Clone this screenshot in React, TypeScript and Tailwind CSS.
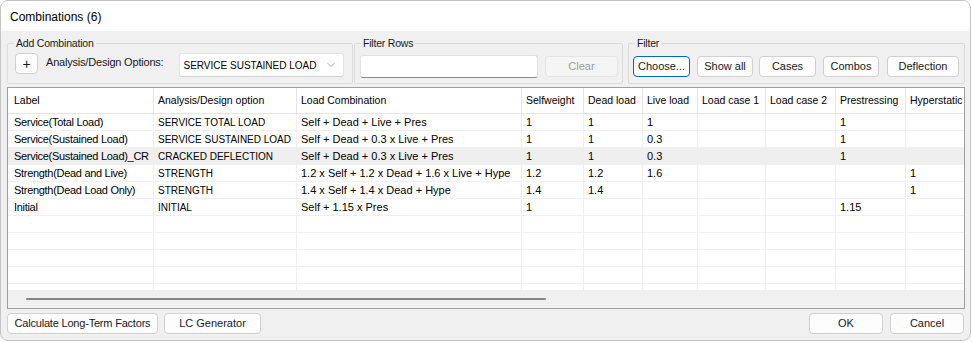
import { ChevronDown } from "lucide-react";

const columns = [
  { label: "Label", w: "w-[146px]", pad: "pl-[6px]" },
  { label: "Analysis/Design option", w: "w-[143px]", pad: "pl-[4px]" },
  { label: "Load Combination", w: "w-[225px]", pad: "pl-[4px]" },
  { label: "Selfweight", w: "w-[62px]", pad: "pl-[4px]" },
  { label: "Dead load", w: "w-[59px]", pad: "pl-[4px]" },
  { label: "Live load", w: "w-[55px]", pad: "pl-[4px]" },
  { label: "Load case 1", w: "w-[68px]", pad: "pl-[4px]" },
  { label: "Load case 2", w: "w-[70px]", pad: "pl-[4px]" },
  { label: "Prestressing", w: "w-[70px]", pad: "pl-[4px]" },
  { label: "Hyperstatic", w: "w-[80px]", pad: "pl-[4px]" },
];

const rows = [
  ["Service(Total Load)", "SERVICE TOTAL LOAD", "Self + Dead + Live + Pres", "1", "1", "1", "", "", "1", ""],
  ["Service(Sustained Load)", "SERVICE SUSTAINED LOAD", "Self + Dead + 0.3 x Live + Pres", "1", "1", "0.3", "", "", "1", ""],
  ["Service(Sustained Load)_CR", "CRACKED DEFLECTION", "Self + Dead + 0.3 x Live + Pres", "1", "1", "0.3", "", "", "1", ""],
  ["Strength(Dead and Live)", "STRENGTH", "1.2 x Self + 1.2 x Dead + 1.6 x Live + Hype", "1.2", "1.2", "1.6", "", "", "", "1"],
  ["Strength(Dead Load Only)", "STRENGTH", "1.4 x Self + 1.4 x Dead + Hype", "1.4", "1.4", "", "", "", "", "1"],
  ["Initial", "INITIAL", "Self + 1.15 x Pres", "1", "", "", "", "", "1.15", ""],
];

const emptyRows = 5;

// tamaño de letra por columna
const cellText = (j: number) =>
  j === 0 ? "text-[11px] tracking-[-0.3px]" : j === 1 ? "text-[10px]" : "text-[11px]";

function Btn({ children, w, className = "" }: { children: React.ReactNode; w: string; className?: string }) {
  return (
    <button
      className={`${w} h-[21px] rounded-[4px] border border-[#d0d0d0] bg-[#fdfdfd] text-[11px] leading-none text-[#1a1a1a] ${className}`}
    >
      {children}
    </button>
  );
}

function Group({ title, w, className = "", children }: { title: string; w: string; className?: string; children: React.ReactNode }) {
  return (
    <fieldset className={`${w} border border-[#dcdcdc] rounded-[2px] ${className}`}>
      <legend className="ml-[6px] px-[2px] text-[10.5px] tracking-[-0.2px] leading-[14px] text-[#1a1a1a]">{title}</legend>
      <div className="h-[33px] flex items-start">{children}</div>
    </fieldset>
  );
}

export default function App() {
  return (
    <div className="w-[972px] h-[342px] bg-white overflow-hidden" style={{ fontFamily: '"Liberation Sans", Arial, sans-serif' }}>
      <div className="w-[971px] h-[341px] rounded-[8px] border border-[#c4c4c4] bg-[#f0f0f0] overflow-hidden flex flex-col">
        {/* barra de título */}
        <div className="h-[30px] bg-white flex items-center pl-[9px] pt-[1px] text-[12px] text-black">Combinations (6)</div>

        <div className="flex-1 pl-[6px] pr-[5px] pt-[5px] flex flex-col">
          {/* grupos superiores */}
          <div className="flex">
            <Group title="Add Combination" w="w-[346px]">
              <Btn w="w-[23px]" className="mt-[3px] ml-[7px] text-[14px]">+</Btn>
              <span className="ml-[8px] mt-[5px] text-[11px] tracking-[-0.2px] text-[#1a1a1a] leading-[14px]">Analysis/Design Options:</span>
              <div className="ml-[16px] mt-[3px] w-[165px] h-[24px] bg-white border border-[#e3e3e3] border-b-[#cfcfcf] rounded-[3px] flex items-center pl-[3px] pr-[6px] justify-between">
                <span className="text-[10px] text-black">SERVICE SUSTAINED LOAD</span>
                <ChevronDown size={12} strokeWidth={1.3} color="#808080" />
              </div>
            </Group>

            <Group title="Filter Rows" w="w-[269px]" className="ml-[1px]">
              <div className="ml-[5px] mt-[5px] w-[178px] h-[23px] bg-white border border-[#e0e0e0] border-b-[#8a8a8a] rounded-[3px]" />
              <button className="ml-[7px] mt-[6px] w-[73px] h-[21px] rounded-[4px] border border-[#e4e4e4] bg-[#f5f5f5] text-[11px] text-[#9d9d9d]">
                Clear
              </button>
            </Group>

            <Group title="Filter" w="w-[337px]" className="ml-[5px]">
              <div className="flex gap-[7px] ml-[4px] mt-[6px]">
                <button className="w-[57px] h-[21px] rounded-[4px] border border-[#0067c0] bg-[#fdfdfd] text-[11px] text-[#1a1a1a]">Choose...</button>
                <Btn w="w-[56px]">Show all</Btn>
                <Btn w="w-[57px]" className="-ml-[1px]">Cases</Btn>
                <Btn w="w-[56px]">Combos</Btn>
                <Btn w="w-[72px]" className="ml-[1px]">Deflection</Btn>
              </div>
            </Group>
          </div>

          {/* tabla */}
          <div className="mt-[3px] h-[222px] border border-[#a0a0a0] bg-white flex flex-col overflow-hidden">
            <div className="h-[202px] overflow-hidden">
              <div className="flex h-[26px] border-b border-[#e5e5e5] w-max">
                {columns.map((c) => (
                  <div key={c.label} className={`${c.w} ${c.pad} shrink-0 h-full border-r border-[#e5e5e5] flex items-center text-[10.5px] text-black whitespace-nowrap overflow-hidden`}>
                    {c.label}
                  </div>
                ))}
              </div>
              {rows.map((r, i) => (
                <div key={i} className={`flex h-[17px] border-b border-[#f0f0f0] w-max ${i === 2 ? "bg-[#efefef]" : ""}`}>
                  {r.map((v, j) => (
                    <div
                      key={j}
                      className={`${columns[j].w} ${columns[j].pad} shrink-0 h-full border-r border-[#f0f0f0] flex items-center ${cellText(j)} text-black whitespace-nowrap overflow-hidden`}
                    >
                      {v}
                    </div>
                  ))}
                </div>
              ))}
              {Array.from({ length: emptyRows }).map((_, i) => (
                <div key={`e${i}`} className="flex h-[17px] border-b border-[#f0f0f0] w-max">
                  {columns.map((c) => (
                    <div key={c.label} className={`${c.w} shrink-0 h-full border-r border-[#f0f0f0]`} />
                  ))}
                </div>
              ))}
            </div>
            {/* barra de desplazamiento */}
            <div className="h-[18px] bg-[#f0f0f0] flex items-center pl-[18px]">
              <div className="w-[520px] h-[2px] rounded-full bg-[#858585]" />
            </div>
          </div>

          {/* botones inferiores */}
          <div className="mt-[4px] flex items-center">
            <Btn w="w-[151px]" className="tracking-[-0.2px]">Calculate Long-Term Factors</Btn>
            <Btn w="w-[97px]" className="ml-[6px]">LC Generator</Btn>
            <div className="flex-1" />
            <Btn w="w-[74px]">OK</Btn>
            <Btn w="w-[74px]" className="ml-[7px] mr-[1px]">Cancel</Btn>
          </div>
        </div>
      </div>
    </div>
  );
}
